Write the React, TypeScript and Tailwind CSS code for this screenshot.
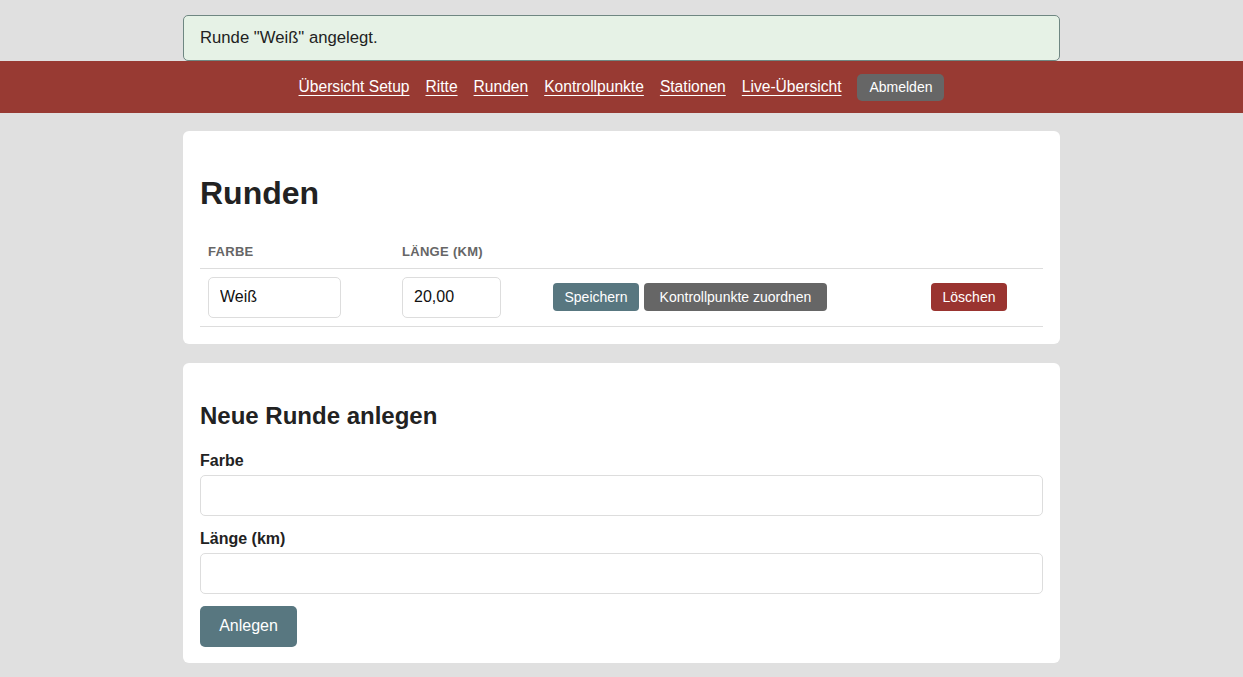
const NAV_LINKS = [
  "Übersicht Setup",
  "Ritte",
  "Runden",
  "Kontrollpunkte",
  "Stationen",
  "Live-Übersicht",
];

export default function App() {
  return (
    <div
      className="min-h-screen bg-[#e0e0e0] pt-[15px] pb-[20px] text-[#222]"
      style={{ fontFamily: '"Liberation Sans", Arial, Helvetica, sans-serif' }}
    >
      {/* Flash */}
      <div className="mx-auto w-[877px] h-[46px] flex items-center rounded-[5px] border border-[#6f8782] bg-[#e6f2e6] px-[16px] text-[16.7px]">
        Runde "Weiß" angelegt.
      </div>

      {/* Nav */}
      <nav className="h-[52px] bg-[#983a33] flex items-center justify-center gap-[16px]">
        {NAV_LINKS.map((label) => (
          <a
            key={label}
            href="#"
            className="text-[15.6px] text-white underline underline-offset-[3px]"
          >
            {label}
          </a>
        ))}
        <button className="h-[27px] w-[87px] rounded-[5px] bg-[#666] text-[14px] text-white">
          Abmelden
        </button>
      </nav>

      {/* Runden */}
      <section className="mx-auto mt-[18px] w-[877px] rounded-[6px] bg-white px-[17px] pt-[17px] pb-[17px]">
        <h1 className="mt-[27px] text-[32px] font-bold leading-[37px] text-[#222]">Runden</h1>
        <table className="mt-[23px] w-full border-collapse">
          <thead>
            <tr className="border-b border-[#ddd]">
              <th className="w-[194px] h-[33px] px-[8px] text-left text-[13px] font-bold uppercase tracking-[0.3px] text-[#666]">
                Farbe
              </th>
              <th className="w-[151px] px-[8px] text-left text-[13px] font-bold uppercase tracking-[0.3px] text-[#666]">
                Länge (km)
              </th>
              <th className="w-[378px]"></th>
              <th></th>
            </tr>
          </thead>
          <tbody>
            <tr className="border-b border-[#ddd]">
              <td className="px-[8px] py-[8px]">
                <input
                  defaultValue="Weiß"
                  className="h-[41px] w-[133px] rounded-[5px] border border-[#ddd] px-[11px] text-[16px] text-[#111] outline-none"
                />
              </td>
              <td className="px-[8px] py-[8px]">
                <input
                  defaultValue="20,00"
                  className="h-[41px] w-[99px] rounded-[5px] border border-[#ddd] px-[11px] text-[16px] text-[#111] outline-none"
                />
              </td>
              <td className="px-[8px]">
                <div className="flex gap-[5px]">
                  <button className="h-[28px] w-[86px] rounded-[4px] bg-[#587780] text-[14px] text-white">
                    Speichern
                  </button>
                  <button className="h-[28px] w-[183px] rounded-[4px] bg-[#666] text-[14px] text-white">
                    Kontrollpunkte zuordnen
                  </button>
                </div>
              </td>
              <td className="px-[8px]">
                <button className="h-[28px] w-[76px] rounded-[4px] bg-[#9a3430] text-[14px] text-white">
                  Löschen
                </button>
              </td>
            </tr>
          </tbody>
        </table>
      </section>

      {/* Neue Runde */}
      <section className="mx-auto mt-[19px] w-[877px] rounded-[6px] bg-white px-[17px] pt-[17px] pb-[16px]">
        <h2 className="mt-[22px] text-[24px] font-bold leading-[28px] text-[#222]">Neue Runde anlegen</h2>
        <label className="mt-[22px] block text-[16px] font-bold leading-[18px]">Farbe</label>
        <input className="mt-[5px] block h-[41px] w-full rounded-[5px] border border-[#ddd] px-[11px] text-[16px] outline-none" />
        <label className="mt-[14px] block text-[16px] font-bold leading-[18px]">Länge (km)</label>
        <input className="mt-[5px] block h-[41px] w-full rounded-[5px] border border-[#ddd] px-[11px] text-[16px] outline-none" />
        <button className="mt-[12px] h-[41px] w-[97px] rounded-[5px] bg-[#587780] text-[16px] text-white">
          Anlegen
        </button>
      </section>
    </div>
  );
}
